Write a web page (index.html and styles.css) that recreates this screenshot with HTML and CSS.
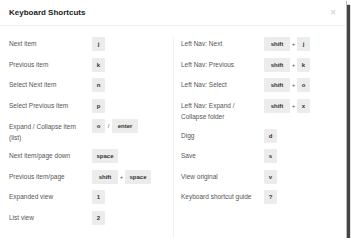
FILE: index.html
```html
<!DOCTYPE html>
<html lang="en">

<head>
    <meta charset="UTF-8">
    <meta name="viewport" content="width=device-width, initial-scale=1.0">
    <title>Keyboard Shortcuts</title>
    <link rel="stylesheet" href="styles.css">
</head>

<body>

    <div class="dialog">
        <header class="dialog-header">
            <h1>Keyboard Shortcuts</h1>
            <span class="close">&times;</span>
        </header>

        <div class="dialog-body">
            <ul class="shortcuts left">
                <li class="row">
                    <span class="label">Next item</span>
                    <span class="keys"><kbd class="key">j</kbd></span>
                </li>
                <li class="row">
                    <span class="label">Previous item</span>
                    <span class="keys"><kbd class="key">k</kbd></span>
                </li>
                <li class="row">
                    <span class="label">Select Next item</span>
                    <span class="keys"><kbd class="key">n</kbd></span>
                </li>
                <li class="row">
                    <span class="label">Select Previous item</span>
                    <span class="keys"><kbd class="key">p</kbd></span>
                </li>
                <li class="row">
                    <span class="label two-line">Expand / Collapse item (list)</span>
                    <span class="keys"><kbd class="key">o</kbd><span class="sep">/</span><kbd class="key wide">enter</kbd></span>
                </li>
                <li class="row">
                    <span class="label">Next item/page down</span>
                    <span class="keys"><kbd class="key wide">space</kbd></span>
                </li>
                <li class="row">
                    <span class="label">Previous item/page</span>
                    <span class="keys"><kbd class="key wide">shift</kbd><span class="sep">+</span><kbd class="key wide">space</kbd></span>
                </li>
                <li class="row">
                    <span class="label">Expanded view</span>
                    <span class="keys"><kbd class="key">1</kbd></span>
                </li>
                <li class="row">
                    <span class="label">List view</span>
                    <span class="keys"><kbd class="key">2</kbd></span>
                </li>
            </ul>

            <ul class="shortcuts right">
                <li class="row">
                    <span class="label">Left Nav: Next</span>
                    <span class="keys"><kbd class="key wide">shift</kbd><span class="sep">+</span><kbd class="key">j</kbd></span>
                </li>
                <li class="row">
                    <span class="label">Left Nav: Previous</span>
                    <span class="keys"><kbd class="key wide">shift</kbd><span class="sep">+</span><kbd class="key">k</kbd></span>
                </li>
                <li class="row">
                    <span class="label">Left Nav: Select</span>
                    <span class="keys"><kbd class="key wide">shift</kbd><span class="sep">+</span><kbd class="key">o</kbd></span>
                </li>
                <li class="row">
                    <span class="label two-line narrow">Left Nav: Expand / Collapse folder</span>
                    <span class="keys"><kbd class="key wide">shift</kbd><span class="sep">+</span><kbd class="key">x</kbd></span>
                </li>
                <li class="row">
                    <span class="label">Digg</span>
                    <span class="keys"><kbd class="key">d</kbd></span>
                </li>
                <li class="row">
                    <span class="label">Save</span>
                    <span class="keys"><kbd class="key">s</kbd></span>
                </li>
                <li class="row">
                    <span class="label">View original</span>
                    <span class="keys"><kbd class="key">v</kbd></span>
                </li>
                <li class="row">
                    <span class="label">Keyboard shortcut guide</span>
                    <span class="keys"><kbd class="key">?</kbd></span>
                </li>
            </ul>
        </div>
    </div>

</body>

</html>
```

FILE: styles.css
```css
body {
    font-family: "Liberation Sans", Arial, sans-serif;
    margin: 0;
    padding: 0;
    background-color: white;
}

.dialog {
    width: 346px;
    height: 238px;
    background-color: white;
    box-shadow: 1px 1px 0 #bbb, 4px 5px 1px #444;
}

.dialog-header {
    display: flex;
    align-items: center;
    justify-content: space-between;
    height: 25px;
    padding: 0 9px;
    border-bottom: 1px solid #f0f0f0;
}

.dialog-header h1 {
    margin: 0;
    font-size: 8px;
    font-weight: bold;
    color: #222;
}

.close {
    font-size: 10px;
    color: #ccc;
    margin-right: 1px;
}

.dialog-body {
    display: flex;
    height: 206px;
    padding-top: 11px;
}

.shortcuts {
    list-style: none;
    margin: 0;
    padding: 0 0 0 9px;
}

.shortcuts.left {
    width: 164px;
    border-right: 1px solid #f2f2f2;
}

.shortcuts.right {
    padding-left: 7px;
}

.row {
    display: flex;
    align-items: flex-start;
    margin-bottom: 6.5px;
}

.label {
    width: 83px;
    flex-shrink: 0;
    font-size: 6.5px;
    line-height: 14px;
    color: #555;
}

.label.two-line {
    width: 75px;
    margin-right: 8px;
    line-height: 11px;
    padding-top: 1.5px;
}

.label.two-line.narrow {
    width: 58px;
    margin-right: 25px;
}

.keys {
    display: flex;
    align-items: center;
}

.key {
    display: inline-block;
    min-width: 13px;
    height: 14px;
    line-height: 14px;
    text-align: center;
    font-family: "Liberation Sans", Arial, sans-serif;
    font-size: 6px;
    font-weight: bold;
    color: #333;
    background-color: #ececec;
    border-radius: 1px;
}

.key.wide {
    width: 26px;
}

.sep {
    width: 7px;
    text-align: center;
    font-size: 6px;
    color: #555;
}
```
